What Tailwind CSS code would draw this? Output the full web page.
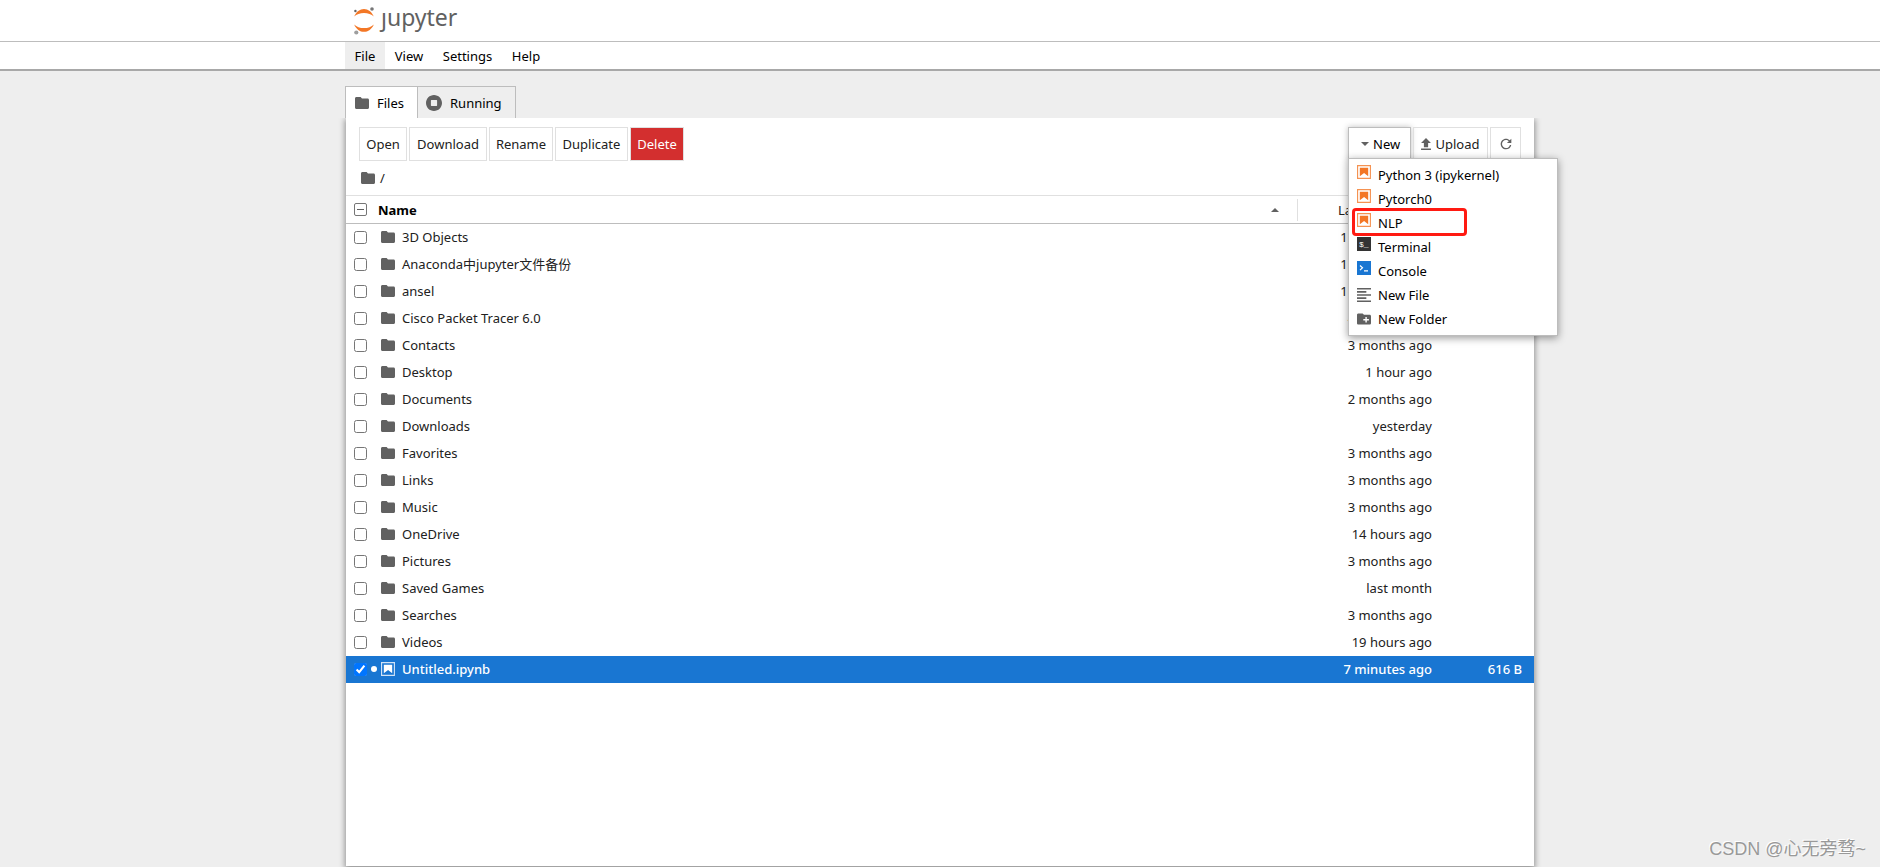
<!DOCTYPE html>
<html lang="en">
<head>
<meta charset="utf-8">
<title>Home</title>
<script src="https://cdn.jsdelivr.net/npm/@tailwindcss/browser@4"></script>
</head>
<body class="flex h-screen flex-col overflow-hidden bg-[#eeeeee] font-['Noto_Sans','Noto_Sans_CJK_SC',sans-serif] text-[13px] leading-5 text-[#212121]">
<svg class="hidden" aria-hidden="true">
  <symbol id="folder" viewBox="2 4 20 16" preserveAspectRatio="none"><path fill="#616161" d="M10 4H4c-1.1 0-1.99.9-1.99 2L2 18c0 1.1.9 2 2 2h16c1.1 0 2-.9 2-2V8c0-1.1-.9-2-2-2h-8l-2-2z"/></symbol>
  <symbol id="notebook" viewBox="1.8 1.8 18.4 18.4"><path fill="currentColor" fill-opacity=".8" d="M18.7 3.3v15.4H3.3V3.3h15.4m1.5-1.5H1.8v18.3h18.3l.1-18.3z"/><path fill="currentColor" d="M16.5 16.5l-5.4-4.3-5.6 4.3v-11h11z"/></symbol>
</svg>

<header class="shrink-0 border-b border-[#bdbdbd] bg-white">
  <div class="mx-auto flex h-[41px] w-[1188px] max-w-full items-center">
    <a href="#" aria-label="jupyter" class="ml-2 flex items-center gap-[6px] text-[#616161]">
      <svg class="h-7 w-[21px]" viewBox="0 0 21 28" aria-hidden="true">
        <path fill="#f37726" d="M.2 9.6C2 4.800 6 2 10 2s8 2.800 9.800 7.600C17.500 7.200 14 5.900 10 5.900S2.500 7.200.2 9.600z"/>
        <path fill="#f37726" d="M.2 17.400C2 22 6 24.800 10 24.800s8-2.800 9.800-7.400C17.500 19.800 14 21.100 10 21.100S2.500 19.800.2 17.400z"/>
        <circle cx="18" cy="2" r="1.800" fill="#767677"/><circle cx="1.400" cy="4" r="1.200" fill="#616262"/><circle cx="2.300" cy="25.500" r="2.100" fill="#9e9e9e"/>
      </svg>
      <span class="-mt-2 text-[23px] leading-7">ȷupyter</span>
    </a>
  </div>
</header>
<nav class="z-10 shrink-0 border-b-2 border-[#a8a8a8] bg-white text-black">
  <div class="mx-auto flex h-[27px] w-[1190px] max-w-full">
    <button class="w-10 bg-[#eeeeee]">File</button>
    <button class="w-12">View</button>
    <button class="w-[69px]">Settings</button>
    <button class="w-12">Help</button>
  </div>
</nav>

<main class="mx-auto flex w-[1190px] max-w-full grow flex-col pt-[15px]">
  <div class="flex h-8 shrink-0 text-black" role="tablist">
    <button role="tab" aria-selected="true" class="flex items-center gap-2 border border-b-0 border-[#bdbdbd] bg-white pl-[9px] pr-[13px]"><svg class="h-3 w-[14px]"><use href="#folder"/></svg>Files</button>
    <button role="tab" aria-selected="false" class="flex items-center gap-2 border-t border-r border-[#bdbdbd] pl-2 pr-[13px]"><svg class="size-4" viewBox="8 8 496 496"><path fill="#616161" d="M256 8C119 8 8 119 8 256s111 248 248 248 248-111 248-248S393 8 256 8zm96 328c0 8.800-7.200 16-16 16H176c-8.800 0-16-7.200-16-16V176c0-8.800 7.200-16 16-16h160c8.800 0 16 7.200 16 16v160z"/></svg>Running</button>
  </div>
  <section class="mx-px mb-px grow bg-white shadow-[0_2px_6px_1px_rgba(0,0,0,0.4)]" style="clip-path: inset(0 -12px -12px -12px)">
    <div class="flex justify-between px-[13px] pt-[9px]">
      <div class="flex h-[34px] gap-[2px]">
        <button class="w-12 border border-[#e0e0e0]">Open</button>
        <button class="w-[78px] border border-[#e0e0e0]">Download</button>
        <button class="w-16 border border-[#e0e0e0]">Rename</button>
        <button class="w-[73px] border border-[#e0e0e0]">Duplicate</button>
        <button class="w-[54px] border border-[#e0e0e0] bg-[#d32f2f] text-white">Delete</button>
      </div>
      <div class="flex h-[34px] gap-[2px]">
        <button aria-haspopup="menu" class="flex w-[63px] items-center gap-1 border border-[#bdbdbd] pl-3 text-black shadow-[0_0_6px_rgba(0,0,0,0.25)]"><svg class="h-1 w-2" viewBox="0 0 8 4"><path d="M0 0h8L4 4z" fill="#616161"/></svg>New</button>
        <button class="flex w-[75px] items-center justify-center gap-1 border border-[#e0e0e0]"><svg class="h-3 w-[10px] shrink-0" viewBox="5 3 14 17"><path fill="#616161" d="M5 20h14v-2H5v2zm0-10h4v6h6v-6h4l-7-7-7 7z"/></svg>Upload</button>
        <button aria-label="Refresh" class="flex w-[31px] items-center justify-center border border-[#e0e0e0]"><svg class="size-4" viewBox="0 0 18 18"><path fill="#616161" d="M9 13.500c-2.490 0-4.500-2.010-4.500-4.500S6.510 4.500 9 4.500c1.240 0 2.360.52 3.170 1.330L10 8h5V3l-1.760 1.760C12.150 3.680 10.660 3 9 3 5.690 3 3.010 5.690 3.010 9S5.690 15 9 15c2.970 0 5.430-2.160 5.900-5h-1.520c-.46 2-2.240 3.500-4.380 3.500z"/></svg></button>
      </div>
    </div>
    <div class="flex h-[34px] items-center gap-[5px] pl-[15px]"><svg class="h-3 w-[14px]"><use href="#folder"/></svg><a href="#">/</a></div>

    <table class="w-full table-fixed border-collapse text-right [&_input]:m-0 [&_input]:size-[13px] [&_td]:p-0 [&_th]:p-0 [&_tbody_tr]:h-[27px] [&_label]:flex [&_label]:items-center [&_label]:pl-2 [&_label_svg]:mr-[7px] [&_label_svg]:ml-[14px] [&_label_svg]:h-3 [&_label_svg]:w-[14px] [&_td:nth-child(2)]:pr-[12px] [&_td:nth-child(3)]:pr-3">
      <colgroup><col><col class="w-[146px]"><col class="w-[90px]"></colgroup>
      <thead class="border-t border-b border-t-[#e0e0e0] border-b-[#bdbdbd]">
        <tr class="h-7">
          <th><div class="flex h-[22px] items-center border-r border-[#e0e0e0] pr-[18px] pl-2">
            <span class="mr-[11px] grid size-[13px] place-items-center"><input type="checkbox" aria-label="Select all files" class="col-start-1 row-start-1 appearance-none rounded-[2px] border border-[#767676]"><span class="col-start-1 row-start-1 h-px w-[7px] bg-[#616161]"></span></span>
            <span class="text-black">Name</span>
            <svg class="ml-auto h-1 w-2" viewBox="0 0 8 4"><path d="M0 4h8L4 0z" fill="#616161"/></svg></div></th>
          <th class="text-left font-normal whitespace-nowrap"><span class="pl-10">Last Modified</span></th>
          <th class="font-normal"><span class="pr-3">File Size</span></th>
        </tr>
      </thead>
      <tbody>
        <tr><td><label><input type="checkbox"><svg><use href="#folder"/></svg>3D Objects</label></td><td>11 months ago</td><td></td></tr>
        <tr><td><label><input type="checkbox"><svg><use href="#folder"/></svg>Anaconda中jupyter文件备份</label></td><td>11 months ago</td><td></td></tr>
        <tr><td><label><input type="checkbox"><svg><use href="#folder"/></svg>ansel</label></td><td>11 months ago</td><td></td></tr>
        <tr><td><label><input type="checkbox"><svg><use href="#folder"/></svg>Cisco Packet Tracer 6.0</label></td><td>4 months ago</td><td></td></tr>
        <tr><td><label><input type="checkbox"><svg><use href="#folder"/></svg>Contacts</label></td><td>3 months ago</td><td></td></tr>
        <tr><td><label><input type="checkbox"><svg><use href="#folder"/></svg>Desktop</label></td><td>1 hour ago</td><td></td></tr>
        <tr><td><label><input type="checkbox"><svg><use href="#folder"/></svg>Documents</label></td><td>2 months ago</td><td></td></tr>
        <tr><td><label><input type="checkbox"><svg><use href="#folder"/></svg>Downloads</label></td><td>yesterday</td><td></td></tr>
        <tr><td><label><input type="checkbox"><svg><use href="#folder"/></svg>Favorites</label></td><td>3 months ago</td><td></td></tr>
        <tr><td><label><input type="checkbox"><svg><use href="#folder"/></svg>Links</label></td><td>3 months ago</td><td></td></tr>
        <tr><td><label><input type="checkbox"><svg><use href="#folder"/></svg>Music</label></td><td>3 months ago</td><td></td></tr>
        <tr><td><label><input type="checkbox"><svg><use href="#folder"/></svg>OneDrive</label></td><td>14 hours ago</td><td></td></tr>
        <tr><td><label><input type="checkbox"><svg><use href="#folder"/></svg>Pictures</label></td><td>3 months ago</td><td></td></tr>
        <tr><td><label><input type="checkbox"><svg><use href="#folder"/></svg>Saved Games</label></td><td>last month</td><td></td></tr>
        <tr><td><label><input type="checkbox"><svg><use href="#folder"/></svg>Searches</label></td><td>3 months ago</td><td></td></tr>
        <tr><td><label><input type="checkbox"><svg><use href="#folder"/></svg>Videos</label></td><td>19 hours ago</td><td></td></tr>
        <tr class="bg-[#1976d2] font-medium text-white"><td><label><input type="checkbox" checked><span class="ml-1 size-[6px] rounded-full bg-white"></span><svg class="ml-1! h-[14px]!"><use href="#notebook"/></svg>Untitled.ipynb</label></td><td>7 minutes ago</td><td>616 B</td></tr>
      </tbody>
    </table>
  </section>
</main>

<div class="pointer-events-none absolute inset-x-0 top-[158px] z-20 mx-auto w-[1190px]">
  <div role="menu" class="pointer-events-auto absolute top-0 -right-[23px] w-[210px] border border-[#bdbdbd] bg-white py-1 text-black shadow-[0_2px_8px_rgba(0,0,0,0.4)] [&>button]:flex [&>button]:h-6 [&>button]:w-full [&>button]:items-center [&>button]:gap-[7px] [&>button]:pl-2 [&_svg]:size-[14px]">
    <button role="menuitem"><svg class="-mt-[6px] text-[#f37726]"><use href="#notebook"/></svg>Python 3 (ipykernel)</button>
    <button role="menuitem"><svg class="-mt-[6px] text-[#f37726]"><use href="#notebook"/></svg>Pytorch0</button>
    <button role="menuitem"><svg class="-mt-[6px] text-[#f37726]"><use href="#notebook"/></svg>NLP</button>
    <button role="menuitem"><svg class="-mt-[6px]" viewBox="0 0 14 14"><path fill="#333" d="M0 0h14v14H0z"/><text x="2" y="10" font-size="8" fill="#fff" font-family="Liberation Mono, monospace">$_</text></svg>Terminal</button>
    <button role="menuitem"><svg class="-mt-[6px]" viewBox="0 0 14 14"><path fill="#1976d2" d="M0 0h14v14H0z"/><path fill="none" stroke="#fff" stroke-width="1.200" d="M3 4.500l2.500 2.300L3 9.100M7 9.800h4"/></svg>Console</button>
    <button role="menuitem"><svg viewBox="3 3 18 18"><path fill="#616161" d="M15 15H3v2h12v-2zm0-8H3v2h12V7zM3 13h18v-2H3v2zm0 8h18v-2H3v2zM3 3v2h18V3H3z"/></svg>New File</button>
    <button role="menuitem"><svg viewBox="2 2 20 20"><path fill="#616161" d="M20 6h-8l-2-2H4c-1.110 0-1.990.89-1.990 2L2 18c0 1.110.89 2 2 2h16c1.110 0 2-.89 2-2V8c0-1.110-.89-2-2-2zm-1 8h-3v3h-2v-3h-3v-2h3V9h2v3h3v2z"/></svg>New Folder</button>
    <div class="absolute top-[49px] left-[3px] h-[28px] w-[115px] rounded-[4px] border-3 border-[#ff1a12]"></div>
  </div>
</div>
<div class="absolute right-[14px] bottom-[6px] font-['Liberation_Sans','Noto_Sans_CJK_SC',sans-serif] text-[18px] leading-6 text-[#999999] [text-shadow:-1px_-1px_0_#fff]">CSDN @心无旁骛~</div>
</body>
</html>
